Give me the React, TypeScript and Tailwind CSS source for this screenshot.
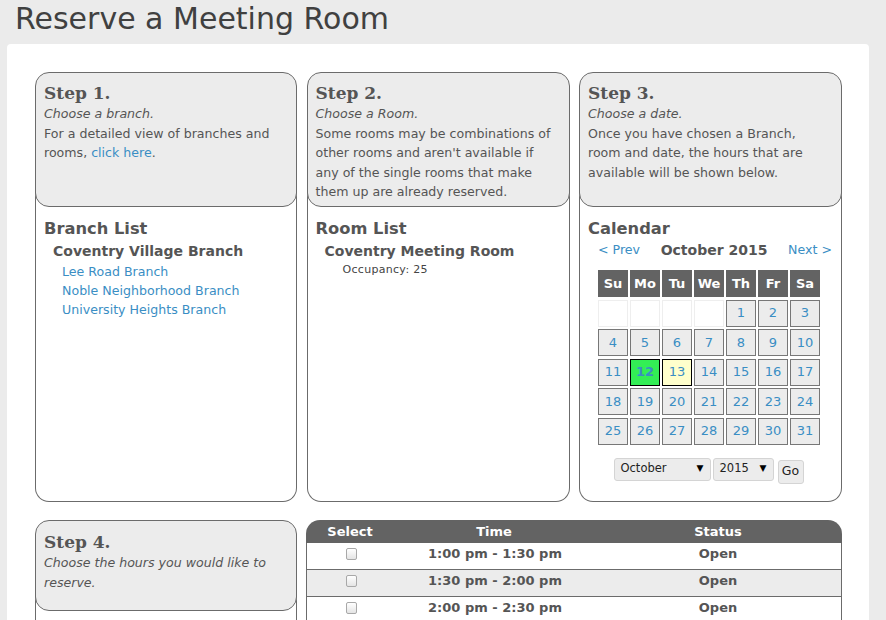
import React from "react";

const font = { fontFamily: '"DejaVu Sans", Verdana, sans-serif' };

const days = ["Su", "Mo", "Tu", "We", "Th", "Fr", "Sa"];
const cells: (number | null)[] = [
  null, null, null, null, 1, 2, 3,
  4, 5, 6, 7, 8, 9, 10,
  11, 12, 13, 14, 15, 16, 17,
  18, 19, 20, 21, 22, 23, 24,
  25, 26, 27, 28, 29, 30, 31,
];

const slots = ["1:00 pm - 1:30 pm", "1:30 pm - 2:00 pm", "2:00 pm - 2:30 pm"];

function StepHeading({ children }: { children: React.ReactNode }) {
  return (
    <div className="text-[17px] font-bold leading-[22px] text-[#555] font-['DejaVu_Serif',Georgia,serif]">
      {children}
    </div>
  );
}

function StepBox({
  header,
  children,
}: {
  header: React.ReactNode;
  children?: React.ReactNode;
}) {
  return (
    <div className="flex h-full flex-col">
      <div className="relative z-10 h-[135px] rounded-[14px] border border-[#6b6b6b] bg-[#ececec] pl-[8px] pr-[12px] pt-[9px]">
        {header}
      </div>
      <div className="-mt-[14px] flex-1 rounded-b-[14px] border-x border-b border-[#6b6b6b] px-[8px] pt-[25px]">
        {children}
      </div>
    </div>
  );
}

function SelectBox({ label, width }: { label: string; width: string }) {
  return (
    <div
      className={`flex h-[23px] items-center justify-between rounded-[3px] border border-[#d4d4d4] bg-[#ececec] pl-[6px] pr-[6px] text-[11.5px] text-[#222] ${width}`}
    >
      <span>{label}</span>
      <span className="text-[9px] text-black">▼</span>
    </div>
  );
}

export default function App() {
  return (
    <div className="min-h-[620px] bg-[#ebebeb] text-[#555]" style={font}>
      <div className="h-[44px] pl-[15px] pt-[0px] text-[30px] leading-[37px] text-[#404040]">
        Reserve a Meeting Room
      </div>

      <div className="ml-[7px] w-[862px] rounded-[4px] bg-white pl-[28px] pt-[28px] pb-[20px]">
        <div className="grid h-[430px] w-[807px] grid-cols-[262px_263px_263px] gap-x-[9.5px]">
          {/* Step 1 */}
          <StepBox
            header={
              <>
                <StepHeading>Step 1.</StepHeading>
                <div className="text-[12.6px] leading-[19.5px]">
                  <div className="italic">Choose a branch.</div>
                  <p>
                    For a detailed view of branches and rooms,{" "}
                    <a className="text-[#3a8ec4]">click here</a>.
                  </p>
                </div>
              </>
            }
          >
            <div className="text-[16.3px] font-bold leading-[22px]">Branch List</div>
            <div className="pl-[9px] text-[14px] font-bold leading-[22px]">
              Coventry Village Branch
            </div>
            <div className="pl-[18px] text-[12.6px] leading-[19px] text-[#3a8ec4]">
              <div>Lee Road Branch</div>
              <div>Noble Neighborhood Branch</div>
              <div>University Heights Branch</div>
            </div>
          </StepBox>

          {/* Step 2 */}
          <StepBox
            header={
              <>
                <StepHeading>Step 2.</StepHeading>
                <div className="text-[12.6px] leading-[19.5px]">
                  <div className="italic">Choose a Room.</div>
                  <div>
                    Some rooms may be combinations of other rooms and aren't
                    available if any of the single rooms that make them up are
                    already reserved.
                  </div>
                </div>
              </>
            }
          >
            <div className="text-[16.3px] font-bold leading-[22px]">Room List</div>
            <div className="pl-[9px] text-[14px] font-bold leading-[22px]">
              Coventry Meeting Room
            </div>
            <div className="pl-[27px] text-[11px] leading-[16px] tracking-[0.3px] text-[#444]">
              Occupancy: 25
            </div>
          </StepBox>

          {/* Step 3 */}
          <StepBox
            header={
              <>
                <StepHeading>Step 3.</StepHeading>
                <div className="text-[12.6px] leading-[19.5px]">
                  <div className="italic">Choose a date.</div>
                  <div>
                    Once you have chosen a Branch, room and date, the hours that
                    are available will be shown below.
                  </div>
                </div>
              </>
            }
          >
            <div className="text-[16.3px] font-bold leading-[22px]">Calendar</div>
            <div className="flex items-center justify-between pl-[10px] pr-[1px]">
              <span className="text-[12.6px] text-[#3a8ec4]">&lt; Prev</span>
              <span className="text-[14px] font-bold">October 2015</span>
              <span className="text-[12.6px] text-[#3a8ec4]">Next &gt;</span>
            </div>
            <div className="ml-[10px] mt-[9px] grid w-[222px] grid-cols-[repeat(7,30px)] gap-x-[2px] gap-y-[2.5px]">
              {days.map((d) => (
                <div
                  key={d}
                  className="flex h-[27px] items-center justify-center bg-[#636363] text-[13px] font-bold text-white"
                >
                  {d}
                </div>
              ))}
              {cells.map((c, i) => {
                if (c === null)
                  return (
                    <div key={i} className="h-[27px] border border-[#eeeeee] bg-white" />
                  );
                const cls =
                  c === 12
                    ? "border-black bg-[#33ee55] font-bold"
                    : c === 13
                    ? "border-black bg-[#ffffcc]"
                    : "border-[#777] bg-[#ececec]";
                return (
                  <div
                    key={i}
                    className={`flex h-[27px] items-center justify-center border text-[13px] text-[#3a8ec4] ${cls}`}
                  >
                    {c}
                  </div>
                );
              })}
            </div>
            <div className="mt-[13px] flex items-start justify-center gap-[2px] pr-[4px]">
              <SelectBox label="October" width="w-[97px]" />
              <SelectBox label="2015" width="w-[61px]" />
              <div className="ml-[2px] mt-[2px] flex h-[24px] w-[26px] items-center justify-center rounded-[3px] border border-[#d4d4d4] bg-[#ececec] text-[12.5px] text-[#222]">
                Go
              </div>
            </div>
          </StepBox>
        </div>

        <div className="mt-[18px] grid w-[807px] grid-cols-[262px_1fr] gap-x-[9px]">
          {/* Step 4 */}
          <div className="flex h-[140px] flex-col">
            <div className="relative z-10 h-[91px] rounded-[14px] border border-[#6b6b6b] bg-[#ececec] pl-[8px] pr-[12px] pt-[10px]">
              <StepHeading>Step 4.</StepHeading>
              <div className="text-[12.6px] italic leading-[19.5px]">
                Choose the hours you would like to reserve.
              </div>
            </div>
            <div className="-mt-[14px] flex-1 border-x border-[#6b6b6b]" />
          </div>

          {/* Time slots */}
          <div className="w-[536px]">
            <div className="grid h-[23px] grid-cols-[88px_200px_1fr] items-center rounded-t-[14px] bg-[#636363] text-[13px] font-bold text-white">
              <div className="text-center">Select</div>
              <div className="text-center">Time</div>
              <div className="text-center">Status</div>
            </div>
            {slots.map((s, i) => (
              <div
                key={s}
                className={`grid h-[27px] grid-cols-[88px_200px_1fr] items-center border-x border-b border-[#6b6b6b] pb-[4px] text-[13px] font-bold text-[#555] ${
                  i % 2 === 1 ? "bg-[#ececec]" : "bg-white"
                }`}
              >
                <div className="flex justify-center">
                  <span className="h-[12px] w-[11px] rounded-[2px] border border-[#a8a8a8] bg-gradient-to-b from-white to-[#e4e4e4]" />
                </div>
                <div className="text-center">{s}</div>
                <div className="text-center">Open</div>
              </div>
            ))}
          </div>
        </div>
      </div>
    </div>
  );
}
